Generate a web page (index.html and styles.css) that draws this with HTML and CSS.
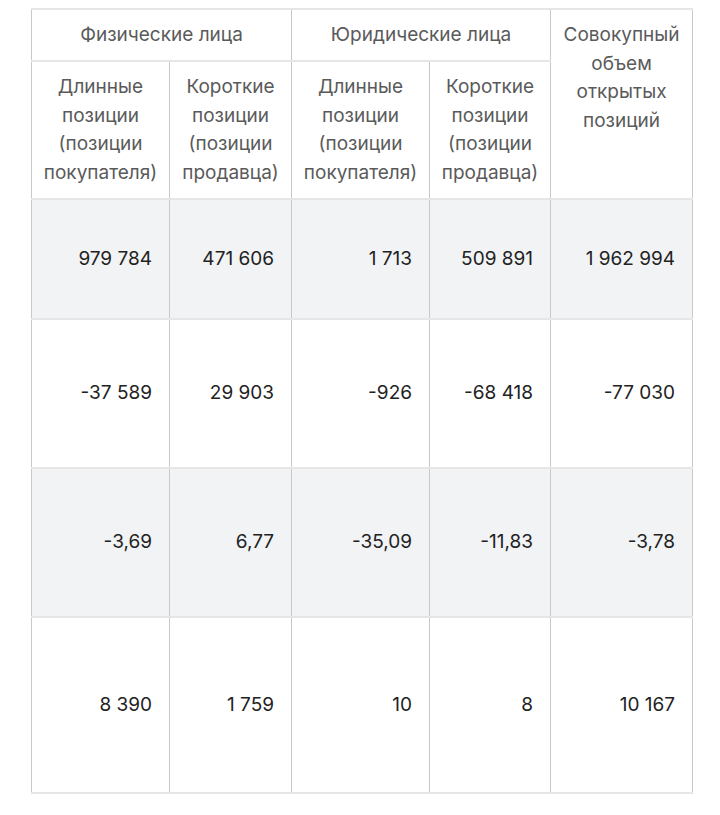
FILE: index.html
```html
<!DOCTYPE html>
<html lang="ru">
<head>
<meta charset="utf-8">
<link rel="stylesheet" href="styles.css">
</head>
<body>
<table class="oi">
  <colgroup>
    <col class="c1"><col class="c2"><col class="c3"><col class="c4"><col class="c5">
  </colgroup>
  <thead>
    <tr class="h1">
      <th colspan="2">Физические лица</th>
      <th colspan="2">Юридические лица</th>
      <th rowspan="2" class="total">Совокупный объем открытых позиций</th>
    </tr>
    <tr class="h2">
      <th>Длинные позиции (позиции покупателя)</th>
      <th>Короткие позиции (позиции продавца)</th>
      <th>Длинные позиции (позиции покупателя)</th>
      <th>Короткие позиции (позиции продавца)</th>
    </tr>
  </thead>
  <tbody>
    <tr class="r1 odd">
      <td>979&nbsp;784</td><td>471&nbsp;606</td><td>1&nbsp;713</td><td>509&nbsp;891</td><td>1&nbsp;962&nbsp;994</td>
    </tr>
    <tr class="r2">
      <td>-37&nbsp;589</td><td>29&nbsp;903</td><td>-926</td><td>-68&nbsp;418</td><td>-77&nbsp;030</td>
    </tr>
    <tr class="r3 odd">
      <td>-3,69</td><td>6,77</td><td>-35,09</td><td>-11,83</td><td>-3,78</td>
    </tr>
    <tr class="r4">
      <td>8&nbsp;390</td><td>1&nbsp;759</td><td>10</td><td>8</td><td>10&nbsp;167</td>
    </tr>
  </tbody>
</table>
</body>
</html>
```
FILE: styles.css
```css
html, body {
  margin: 0;
  padding: 0;
  background: #ffffff;
}

body {
  font-family: Inter, "Noto Sans", "DejaVu Sans", sans-serif;
  font-size: 19px;
  line-height: 28.5px;
}

.oi {
  border-collapse: collapse;
  margin: 8px 0 0 31px;
  table-layout: fixed;
  width: 661px;
}

.c1 { width: 138px; }
.c2 { width: 122px; }
.c3 { width: 138px; }
.c4 { width: 121px; }
.c5 { width: 142px; }

.oi th,
.oi td {
  border-top: 2px solid #e6e6e6;
  border-bottom: 2px solid #e6e6e6;
  border-left: 1px solid #c9c9c9;
  border-right: 1px solid #c9c9c9;
  padding: 0;
}

.oi th {
  font-weight: 400;
  color: #5a5a5a;
  text-align: center;
  vertical-align: top;
}

.h1 th {
  height: 50px;
  vertical-align: middle;
}

.h1 th.total {
  vertical-align: top;
  padding: 11px 4px 0;
}

.h2 th {
  height: 125px;
  padding: 11px 2px 0;
}

.oi td {
  color: #222222;
  text-align: right;
  vertical-align: middle;
  padding-right: 17px;
}

.odd td {
  background: #f1f3f5;
}

.r1 td { height: 118px; }
.r2 td { height: 147px; }
.r3 td { height: 147px; }
.r4 td { height: 174px; }
```
